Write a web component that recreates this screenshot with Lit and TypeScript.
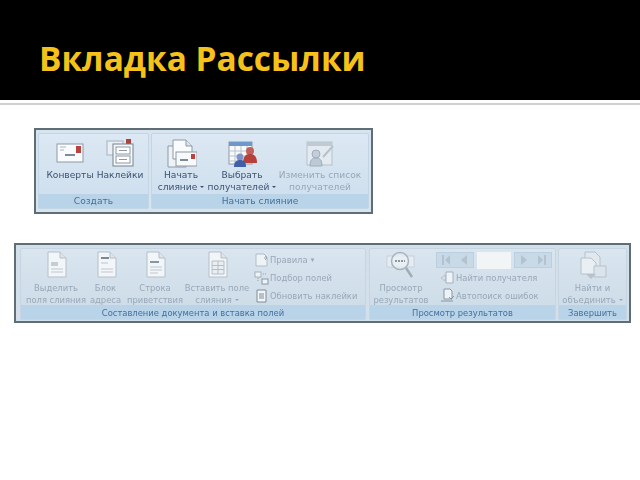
import { LitElement, css, html, svg } from 'lit'
import { customElement, property } from 'lit/decorators.js'

// small ribbon pictures, all drawn on a 32x32 box
const page = (x = 8, y = 3, w = 18, h = 25) => svg`
  <path d="M${x} ${y}h${w - 6}l6 6v${h - 6}h-${w}z" fill="#f3f6f8" stroke="#b4bfc9"/>
  <path d="M${x + w - 6} ${y}v6h6" fill="#dde4ea" stroke="#b4bfc9"/>`

const icons: Record<string, unknown> = {
  envelope: svg`
    <rect x="3" y="7" width="26" height="18" fill="#fafbfc" stroke="#8d99a6"/>
    <rect x="22" y="9" width="5" height="7" fill="#b8433f"/>
    <path d="M6 10h6M6 13h4" stroke="#a9b4c0"/>
    <path d="M11 18h10" stroke="#7d8a98" stroke-width="2"/>`,
  labels: svg`
    <rect x="3" y="4" width="16" height="14" fill="#e9eff4" stroke="#a6b2bd"/>
    <rect x="22" y="2" width="5" height="6" fill="#a8433f"/>
    <rect x="9" y="7" width="20" height="22" fill="#f5f7f9" stroke="#76838f"/>
    <rect x="12" y="10" width="14" height="7" fill="#fff" stroke="#8d99a6"/>
    <rect x="12" y="19" width="14" height="7" fill="#fff" stroke="#8d99a6"/>
    <path d="M15 13.500h8M15 22.500h8" stroke="#8d99a6"/>`,
  merge: svg`
    <path d="M3 9h14l4 4v17H3z" fill="#eef2f5" stroke="#8d99a6"/>
    <path d="M8 3h13l6 6v13H8z" fill="#fafbfc" stroke="#8d99a6"/>
    <path d="M21 3v6h6" fill="#dde4ea" stroke="#8d99a6"/>
    <rect x="11" y="15" width="21" height="14" fill="#f7f9fb" stroke="#8d99a6"/>
    <rect x="26" y="17" width="4" height="5" fill="#b8433f"/>
    <path d="M15 23h8" stroke="#7d8a98" stroke-width="2"/>`,
  recipients: svg`
    <rect x="3" y="5" width="23" height="22" fill="#f7f9fb" stroke="#8d99a6"/>
    <rect x="3" y="5" width="23" height="4" fill="#6f97c9"/>
    <path d="M3 14h23M3 19h23M3 24h23M9 9v18M15 9v18M21 9v18" stroke="#b8c3ce"/>
    <circle cx="24" cy="14" r="4" fill="#c0605a"/>
    <path d="M17 26c0-7 3-9 7-9s7 2 7 9z" fill="#b8403a"/>
    <circle cx="14" cy="20" r="3.500" fill="#7f93c8"/>
    <path d="M8 30c0-5 2-7 6-7s6 2 6 7z" fill="#3f5fa8"/>`,
  editList: svg`
    <rect x="3" y="5" width="25" height="23" fill="#e3ebf1" stroke="#b5c1cc"/>
    <rect x="3" y="5" width="25" height="4" fill="#bfcad4"/>
    <circle cx="12" cy="17" r="4" fill="#c3ced8" stroke="#a0adb9"/>
    <path d="M6 29c0-6 2-8 6-8s6 2 6 8z" fill="#bdc9d4" stroke="#a0adb9"/>
    <path d="M19 20l10-11" stroke="#b5c1cc" stroke-width="2"/>`,
  mergeFields: svg`${page()}
    <path d="M11 13h7v4h-7z" fill="#c4ced7"/>
    <path d="M11 20h12M11 23h12" stroke="#bcc7d1"/>`,
  address: svg`${page()}
    <path d="M11 9h8" stroke="#7b8895" stroke-width="2"/>
    <path d="M11 14h7M11 20h12M11 23h12" stroke="#bcc7d1"/>`,
  greeting: svg`${page()}
    <path d="M11 13h9" stroke="#8a97a3" stroke-width="2"/>
    <path d="M11 18h12M11 21h12M11 24h8" stroke="#bcc7d1"/>`,
  insertField: svg`${page()}
    <path d="M11 12h12v13H11zM11 16.500h12M11 20.500h12M17 12v13" fill="#e9eef2" stroke="#b3bec9"/>`,
  preview: svg`
    <rect x="2" y="7" width="27" height="11" fill="#e6edf2" stroke="#c5d0d9"/>
    <circle cx="15" cy="12" r="8.500" fill="#e9eff4" fill-opacity=".7" stroke="#a6b2bd" stroke-width="1.500"/>
    <path d="M10 12h10" stroke="#8a97a3" stroke-width="2" stroke-dasharray="2 1"/>
    <path d="M21 19l6 9" stroke="#a0adb9" stroke-width="2.500"/>`,
  finish: svg`
    <path d="M8 3h10l5 5v11H8z" fill="#e1e9ef" stroke="#b5c1cc"/>
    <path d="M4 9h10l5 5v11H4z" fill="#e9eff3" stroke="#b5c1cc"/>
    <path d="M17 17h12v11H17z" fill="#dbe4eb" stroke="#b5c1cc"/>
    <path d="M9 25l5 5 5-5z" fill="#b6c2cd"/>`,
  rules: svg`
    <path d="M2 2h8l3 3v9H2z" fill="#eef3f6" stroke="#b0bcc7"/>
    <path d="M10 6h3M11 4l2 2-2 2" fill="none" stroke="#9eabb7"/>`,
  match: svg`
    <rect x="1" y="2" width="6" height="5" fill="#eef3f7" stroke="#a3b0bc"/>
    <rect x="8" y="9" width="6" height="5" fill="#eef3f7" stroke="#8996a3"/>
    <path d="M4 8v3M9 4h3" stroke="#93a1ae" stroke-dasharray="1 1"/>`,
  update: svg`
    <path d="M3 2h9v12H3z" fill="#f1f5f8" stroke="#7f8c99"/>
    <path d="M5 6h5M5 8h5M5 10h5" stroke="#7f8c99"/>`,
  find: svg`
    <path d="M1 8l4-3v2h3v2H5v2z" fill="#d8e0e7" stroke="#a3b0bc" stroke-width=".6"/>
    <path d="M6 2h7v11H6z" fill="#eef3f7" stroke="#a3b0bc"/>`,
  check: svg`
    <path d="M4 1h6l2 2v8H4z" fill="#eef3f7" stroke="#8996a3"/>
    <path d="M1 13h12M9 9l2 2 3-3" fill="none" stroke="#8996a3"/>`,
  first: svg`<path d="M3 2h2v10H3zM11 2v10L6 7z" fill="#b4c2ce"/>`,
  prev: svg`<path d="M10 2v10L4 7z" fill="#b4c2ce"/>`,
  next: svg`<path d="M4 2v10l6-5z" fill="#b4c2ce"/>`,
  last: svg`<path d="M9 2h2v10H9zM3 2v10l5-5z" fill="#b4c2ce"/>`,
}

const pic = (name: string, size = 32) => html`
  <svg width=${size} height=${size} viewBox="0 0 ${size} ${size}">${icons[name]}</svg>`

@customElement('ribbon-button')
export class RibbonButton extends LitElement {
  static styles = css`
    :host {
      display: flex;
      flex-direction: column;
      align-items: center;
      flex: none;
    }
    .icon {
      height: 32px;
    }
    .text {
      margin-top: var(--text-gap, 0);
      text-align: center;
      white-space: nowrap;
      line-height: 12px;
    }
    .line {
      display: block;
      height: 12px;
    }
    .arrow {
      display: inline-block;
      width: 0;
      height: 0;
      margin-left: 3px;
      vertical-align: 2px;
      border-left: 2px solid transparent;
      border-right: 2px solid transparent;
      border-top: 2px solid currentColor;
    }
  `

  @property({ type: String }) icon = ''
  @property({ type: String }) first = ''
  @property({ type: String }) second = ''
  @property({ type: Boolean }) arrow = false

  render() {
    return html`
      <div class="icon">${pic(this.icon)}</div>
      <div class="text">
        <span class="line">${this.first}</span>
        <span class="line">${this.second}${this.arrow ? html`<i class="arrow"></i>` : ''}</span>
      </div>
    `
  }
}

@customElement('ribbon-group')
export class RibbonGroup extends LitElement {
  static styles = css`
    :host {
      display: flex;
      flex-direction: column;
      flex: none;
      box-sizing: border-box;
      border: 1px solid #c3d5e5;
      border-radius: 2px;
      background: linear-gradient(#dce8f3, #cddeed);
    }
    .body {
      flex: 1;
      display: flex;
      min-height: 0;
    }
    .name {
      height: 14px;
      line-height: var(--name-line, 15px);
      text-align: center;
      background: #b9d3e9;
      color: #44709a;
    }
  `

  @property({ type: String }) name = ''

  render() {
    return html`
      <div class="body"><slot></slot></div>
      <div class="name">${this.name}</div>
    `
  }
}

@customElement('app-root')
export class AppRoot extends LitElement {
  static styles = css`
    :host {
      display: block;
      width: 640px;
      height: 480px;
      overflow: hidden;
      background: #fff;
      font-family: 'DejaVu Sans', sans-serif;
    }
    .banner {
      height: 100px;
      padding-left: 39px;
      box-sizing: border-box;
      background: #000;
      color: #f6c21a;
      font: 700 33.4px/116px 'Open Sans', sans-serif;
    }
    .rule {
      height: 2px;
      margin-top: 3px;
      background: #d0d0d0;
    }
    .ribbon {
      display: flex;
      box-sizing: border-box;
      gap: 2px;
      border: 2px solid #5f6e74;
      background: #d6e4f0;
      font-size: 9.1px;
      color: #3b5272;
      filter: blur(0.45px);
    }
    .first {
      width: 339px;
      height: 86px;
      margin: 23px 0 0 34px;
      padding: 3px 2px 3px 2px;
      --text-gap: 0;
    }
    .first ribbon-button {
      padding-top: 3px;
    }
    .second {
      width: 617px;
      height: 80px;
      margin: 29px 0 0 14px;
      padding: 3px 2px 1px 4px;
      background: #d3e0eb;
      color: #98a7b7;
      font-size: 8.4px;
      --text-gap: 1px;
      --name-line: 16px;
    }
    .second ribbon-group {
      background: linear-gradient(#d9e5ef, #ccdbe7);
      border-color: #c6d5e2;
    }
    .off {
      color: #98a7b7;
    }
    .conv {
      width: 52px;
      margin-left: 5px;
    }
    .lab {
      width: 48px;
    }
    .start {
      width: 56px;
      margin-left: 1px;
    }
    .pick {
      width: 66px;
    }
    .edit {
      width: 90px;
    }
    .mf {
      width: 70px;
    }
    .addr {
      width: 29px;
    }
    .greet {
      width: 60px;
      margin-left: 5px;
    }
    .ins {
      width: 64px;
    }
    .results-group {
      margin-left: 1px;
    }
    .prev {
      width: 62px;
    }
    .find-merge {
      width: 67px;
    }
    .stack {
      display: flex;
      flex-direction: column;
      gap: 2px;
      padding-top: 3px;
      margin-left: 5px;
      flex: none;
    }
    .stack.results {
      margin-left: 4px;
    }
    .row {
      display: flex;
      align-items: center;
      height: 16px;
      white-space: nowrap;
    }
    .results .row {
      padding-left: 4px;
    }
    .drop {
      margin-left: 3px;
      font-style: normal;
      font-size: 7px;
    }
    .nav {
      display: flex;
      align-items: center;
      height: 16px;
      gap: 3px;
    }
    .nav-buttons {
      display: flex;
      align-items: center;
      justify-content: space-around;
      width: 38px;
      height: 16px;
      box-sizing: border-box;
      background: #c8d9e7;
      border: 1px solid #bccfdf;
    }
    .nav-buttons svg {
      display: block;
    }
    .nav-input {
      width: 34px;
      height: 17px;
      background: #f2f5f6;
    }
  `

  render() {
    return html`
      <div class="banner">Вкладка Рассылки</div>
      <div class="rule"></div>

      <div class="ribbon first">
        <ribbon-group name="Создать" style="width:111px">
          <ribbon-button class="conv" icon="envelope" first="Конверты"></ribbon-button>
          <ribbon-button class="lab" icon="labels" first="Наклейки"></ribbon-button>
        </ribbon-group>
        <ribbon-group name="Начать слияние" style="width:218px">
          <ribbon-button class="start" icon="merge" first="Начать" second="слияние" arrow></ribbon-button>
          <ribbon-button class="pick" icon="recipients" first="Выбрать" second="получателей" arrow></ribbon-button>
          <ribbon-button class="edit off" icon="editList" first="Изменить список" second="получателей"></ribbon-button>
        </ribbon-group>
      </div>

      <div class="ribbon second">
        <ribbon-group name="Составление документа и вставка полей" style="width:346px">
          <ribbon-button class="mf" icon="mergeFields" first="Выделить" second="поля слияния"></ribbon-button>
          <ribbon-button class="addr" icon="address" first="Блок" second="адреса"></ribbon-button>
          <ribbon-button class="greet" icon="greeting" first="Строка" second="приветствия"></ribbon-button>
          <ribbon-button class="ins" icon="insertField" first="Вставить поле" second="слияния" arrow></ribbon-button>
          <div class="stack">
            <div class="row">${pic('rules', 16)}Правила<i class="drop">▾</i></div>
            <div class="row">${pic('match', 16)}Подбор полей</div>
            <div class="row">${pic('update', 16)}Обновить наклейки</div>
          </div>
        </ribbon-group>
        <ribbon-group class="results-group" name="Просмотр результатов" style="width:187px">
          <ribbon-button class="prev" icon="preview" first="Просмотр" second="результатов"></ribbon-button>
          <div class="stack results">
            <div class="nav">
              <div class="nav-buttons">${pic('first', 14)}${pic('prev', 14)}</div>
              <div class="nav-input"></div>
              <div class="nav-buttons">${pic('next', 14)}${pic('last', 14)}</div>
            </div>
            <div class="row">${pic('find', 16)}Найти получателя</div>
            <div class="row">${pic('check', 16)}Автопоиск ошибок</div>
          </div>
        </ribbon-group>
        <ribbon-group name="Завершить" style="width:69px">
          <ribbon-button class="find-merge" icon="finish" first="Найти и" second="объединить" arrow></ribbon-button>
        </ribbon-group>
      </div>
    `
  }
}
